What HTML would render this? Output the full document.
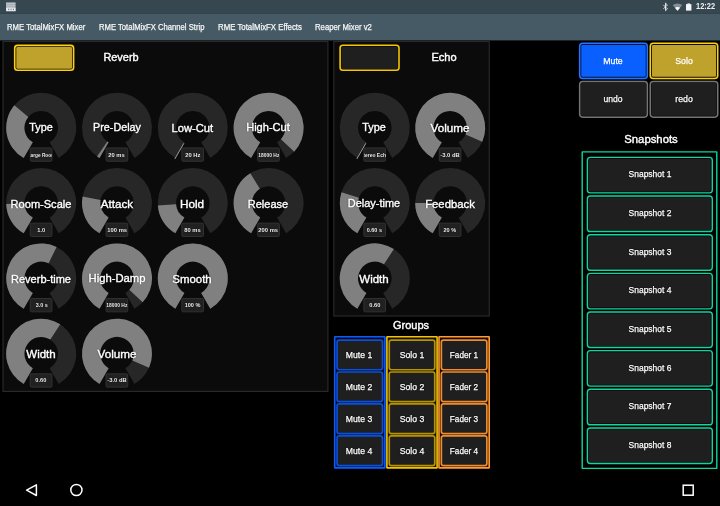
<!DOCTYPE html>
<html><head><meta charset="utf-8"><title>Mixer</title>
<style>
*{box-sizing:border-box;margin:0;padding:0}
html,body{width:720px;height:506px;overflow:hidden;background:#000}
body{font-family:"Liberation Sans",sans-serif;color:#fff;position:relative}
svg{position:absolute;left:0;top:0}
#tx{position:absolute;left:0;top:0;width:720px;height:506px;will-change:transform}
.t{position:absolute;white-space:nowrap;line-height:20px;-webkit-text-stroke:0.25px currentColor}
.vb{position:absolute;width:21.6px;height:12.2px;text-shadow:0 0 1px #000,0 0 1px #000;overflow:hidden;display:flex;align-items:center;justify-content:center;white-space:nowrap;color:#f2f2f2;font-weight:bold;font-size:6.0px}
.vb span{display:block;line-height:8px;flex:none}
</style></head><body>
<svg width="720" height="506" viewBox="0 0 720 506">
<rect x="0" y="0" width="720" height="13.5" fill="#37474f"/>
<rect x="0" y="13.4" width="720" height="27.0" fill="#455a64"/>
<rect x="6" y="2.3" width="9.6" height="9" fill="#9eaab0"/>
<rect x="6.3" y="3.2" width="9" height="1" fill="#c3cbcf"/><rect x="6.3" y="5.2" width="9" height="1.2" fill="#bcc5c9"/>
<rect x="6.2" y="7.6" width="9.3" height="3.5" fill="#eceff0"/>
<g fill="#56656d"><rect x="8.3" y="8.6" width="0.9" height="1.6"/><rect x="10.6" y="8.6" width="0.9" height="1.6"/><rect x="12.9" y="8.6" width="0.9" height="1.6"/></g>
<path d="M663.4 4.9L667.4 8.9L665.5 10.7V3.1L667.4 4.9L663.4 8.9" stroke="#f4f6f7" stroke-width="0.85" fill="none"/>
<path d="M672.7 5.0Q677.5 1.9 682.3 5.0L677.5 10.8Z" fill="#81909a"/>
<path d="M674.9 7.7Q677.5 6.3 680.1 7.7L677.5 10.8Z" fill="#fff"/>
<rect x="686" y="4.1" width="5.4" height="6.5" fill="#f4f6f7"/><rect x="687.5" y="3.4" width="2.4" height="1" fill="#f4f6f7"/>
<rect x="3.00" y="41.50" width="324.90" height="349.90" rx="0.00" fill="#0b0b0b" stroke="#282828" stroke-width="1.2"/><rect x="333.80" y="41.50" width="155.50" height="274.50" rx="0.00" fill="#0b0b0b" stroke="#282828" stroke-width="1.2"/><rect x="14.70" y="45.40" width="58.90" height="24.90" rx="2.80" fill="#100c0a" stroke="#fcd010" stroke-width="1.6"/><rect x="16.30" y="47.00" width="55.70" height="21.70" rx="1.20" fill="#bfa22c"/><rect x="340.10" y="45.30" width="58.90" height="25.00" rx="2.80" fill="#0c0a08" stroke="#f6c600" stroke-width="1.6"/><rect x="341.50" y="46.70" width="56.10" height="22.20" rx="1.40" fill="#1f1f1f"/><path d="M23.70 158.11A35.0 35.0 0 1 1 58.70 158.11L49.60 142.35A16.8 16.8 0 1 0 32.80 142.35Z" fill="#272727"/><path d="M23.70 158.11A35.0 35.0 0 0 1 14.35 105.35L28.31 117.02A16.8 16.8 0 0 0 32.80 142.35Z" fill="#808080"/><rect x="30.25" y="147.95" width="21.70" height="13.30" rx="1.15" fill="#212121" stroke="#363636" stroke-width="0.9"/><path d="M99.50 158.11A35.0 35.0 0 1 1 134.50 158.11L125.40 142.35A16.8 16.8 0 1 0 108.60 142.35Z" fill="#272727"/><path d="M99.50 158.11A35.0 35.0 0 0 1 97.03 156.54L107.41 141.60A16.8 16.8 0 0 0 108.60 142.35Z" fill="#808080"/><rect x="106.05" y="147.95" width="21.70" height="13.30" rx="1.15" fill="#212121" stroke="#363636" stroke-width="0.9"/><path d="M175.30 158.11A35.0 35.0 0 1 1 210.30 158.11L201.20 142.35A16.8 16.8 0 1 0 184.40 142.35Z" fill="#272727"/><path d="M183.90 143.22L174.80 158.98" stroke="#9c9c9c" stroke-width="1" fill="none"/><rect x="181.85" y="147.95" width="21.70" height="13.30" rx="1.15" fill="#212121" stroke="#363636" stroke-width="0.9"/><path d="M251.10 158.11A35.0 35.0 0 1 1 286.10 158.11L277.00 142.35A16.8 16.8 0 1 0 260.20 142.35Z" fill="#272727"/><path d="M251.10 158.11A35.0 35.0 0 1 1 294.24 151.63L280.91 139.24A16.8 16.8 0 1 0 260.20 142.35Z" fill="#808080"/><rect x="257.65" y="147.95" width="21.70" height="13.30" rx="1.15" fill="#212121" stroke="#363636" stroke-width="0.9"/><path d="M23.70 233.31A35.0 35.0 0 1 1 58.70 233.31L49.60 217.55A16.8 16.8 0 1 0 32.80 217.55Z" fill="#272727"/><path d="M23.70 233.31A35.0 35.0 0 0 1 6.21 203.92L24.41 203.44A16.8 16.8 0 0 0 32.80 217.55Z" fill="#808080"/><rect x="30.25" y="223.15" width="21.70" height="13.30" rx="1.15" fill="#212121" stroke="#363636" stroke-width="0.9"/><path d="M99.50 233.31A35.0 35.0 0 1 1 134.50 233.31L125.40 217.55A16.8 16.8 0 1 0 108.60 217.55Z" fill="#272727"/><path d="M99.50 233.31A35.0 35.0 0 0 1 82.59 196.62L100.48 199.94A16.8 16.8 0 0 0 108.60 217.55Z" fill="#808080"/><rect x="106.05" y="223.15" width="21.70" height="13.30" rx="1.15" fill="#212121" stroke="#363636" stroke-width="0.9"/><path d="M175.30 233.31A35.0 35.0 0 1 1 210.30 233.31L201.20 217.55A16.8 16.8 0 1 0 184.40 217.55Z" fill="#272727"/><path d="M175.30 233.31A35.0 35.0 0 0 1 157.88 205.38L176.04 204.14A16.8 16.8 0 0 0 184.40 217.55Z" fill="#808080"/><rect x="181.85" y="223.15" width="21.70" height="13.30" rx="1.15" fill="#212121" stroke="#363636" stroke-width="0.9"/><path d="M251.10 233.31A35.0 35.0 0 1 1 286.10 233.31L277.00 217.55A16.8 16.8 0 1 0 260.20 217.55Z" fill="#272727"/><path d="M251.10 233.31A35.0 35.0 0 0 1 250.31 173.16L259.82 188.68A16.8 16.8 0 0 0 260.20 217.55Z" fill="#808080"/><rect x="257.65" y="223.15" width="21.70" height="13.30" rx="1.15" fill="#212121" stroke="#363636" stroke-width="0.9"/><path d="M23.70 308.71A35.0 35.0 0 1 1 58.70 308.71L49.60 292.95A16.8 16.8 0 1 0 32.80 292.95Z" fill="#272727"/><path d="M23.70 308.71A35.0 35.0 0 0 1 56.60 246.97L48.59 263.31A16.8 16.8 0 0 0 32.80 292.95Z" fill="#808080"/><rect x="30.25" y="298.55" width="21.70" height="13.30" rx="1.15" fill="#212121" stroke="#363636" stroke-width="0.9"/><path d="M99.50 308.71A35.0 35.0 0 1 1 134.50 308.71L125.40 292.95A16.8 16.8 0 1 0 108.60 292.95Z" fill="#272727"/><path d="M99.50 308.71A35.0 35.0 0 1 1 142.64 302.23L129.31 289.84A16.8 16.8 0 1 0 108.60 292.95Z" fill="#808080"/><rect x="106.05" y="298.55" width="21.70" height="13.30" rx="1.15" fill="#212121" stroke="#363636" stroke-width="0.9"/><path d="M175.30 308.71A35.0 35.0 0 1 1 210.30 308.71L201.20 292.95A16.8 16.8 0 1 0 184.40 292.95Z" fill="#272727"/><path d="M175.30 308.71A35.0 35.0 0 1 1 210.30 308.71L201.20 292.95A16.8 16.8 0 1 0 184.40 292.95Z" fill="#808080"/><rect x="181.85" y="298.55" width="21.70" height="13.30" rx="1.15" fill="#212121" stroke="#363636" stroke-width="0.9"/><path d="M23.70 384.01A35.0 35.0 0 1 1 58.70 384.01L49.60 368.25A16.8 16.8 0 1 0 32.80 368.25Z" fill="#272727"/><path d="M23.70 384.01A35.0 35.0 0 1 1 60.26 324.35L50.35 339.61A16.8 16.8 0 1 0 32.80 368.25Z" fill="#808080"/><rect x="30.25" y="373.85" width="21.70" height="13.30" rx="1.15" fill="#212121" stroke="#363636" stroke-width="0.9"/><path d="M99.50 384.01A35.0 35.0 0 1 1 134.50 384.01L125.40 368.25A16.8 16.8 0 1 0 108.60 368.25Z" fill="#272727"/><path d="M99.50 384.01A35.0 35.0 0 1 1 149.05 367.77L132.38 360.45A16.8 16.8 0 1 0 108.60 368.25Z" fill="#808080"/><rect x="106.05" y="373.85" width="21.70" height="13.30" rx="1.15" fill="#212121" stroke="#363636" stroke-width="0.9"/><path d="M357.30 158.11A35.0 35.0 0 1 1 392.30 158.11L383.20 142.35A16.8 16.8 0 1 0 366.40 142.35Z" fill="#272727"/><path d="M365.90 143.22L356.80 158.98" stroke="#9c9c9c" stroke-width="1" fill="none"/><rect x="363.85" y="147.95" width="21.70" height="13.30" rx="1.15" fill="#212121" stroke="#363636" stroke-width="0.9"/><path d="M432.70 158.11A35.0 35.0 0 1 1 467.70 158.11L458.60 142.35A16.8 16.8 0 1 0 441.80 142.35Z" fill="#272727"/><path d="M432.70 158.11A35.0 35.0 0 1 1 482.25 141.87L465.58 134.55A16.8 16.8 0 1 0 441.80 142.35Z" fill="#808080"/><rect x="439.25" y="147.95" width="21.70" height="13.30" rx="1.15" fill="#212121" stroke="#363636" stroke-width="0.9"/><path d="M357.30 233.31A35.0 35.0 0 1 1 392.30 233.31L383.20 217.55A16.8 16.8 0 1 0 366.40 217.55Z" fill="#272727"/><path d="M357.30 233.31A35.0 35.0 0 0 1 341.51 192.18L358.82 197.81A16.8 16.8 0 0 0 366.40 217.55Z" fill="#808080"/><rect x="363.85" y="223.15" width="21.70" height="13.30" rx="1.15" fill="#212121" stroke="#363636" stroke-width="0.9"/><path d="M432.70 233.31A35.0 35.0 0 1 1 467.70 233.31L458.60 217.55A16.8 16.8 0 1 0 441.80 217.55Z" fill="#272727"/><path d="M432.70 233.31A35.0 35.0 0 0 1 415.20 203.00L433.40 203.00A16.8 16.8 0 0 0 441.80 217.55Z" fill="#808080"/><rect x="439.25" y="223.15" width="21.70" height="13.30" rx="1.15" fill="#212121" stroke="#363636" stroke-width="0.9"/><path d="M357.30 308.71A35.0 35.0 0 1 1 392.30 308.71L383.20 292.95A16.8 16.8 0 1 0 366.40 292.95Z" fill="#272727"/><path d="M357.30 308.71A35.0 35.0 0 1 1 393.86 249.05L383.95 264.31A16.8 16.8 0 1 0 366.40 292.95Z" fill="#808080"/><rect x="363.85" y="298.55" width="21.70" height="13.30" rx="1.15" fill="#212121" stroke="#363636" stroke-width="0.9"/><rect x="579.65" y="43.35" width="67.70" height="35.10" rx="3.05" fill="#06123a" stroke="#2474ff" stroke-width="1.5"/><rect x="581.30" y="45.00" width="64.40" height="31.80" rx="1.40" fill="#0a60ff"/><rect x="650.25" y="43.35" width="67.50" height="35.10" rx="3.05" fill="#100c0a" stroke="#fcd010" stroke-width="1.5"/><rect x="651.90" y="45.00" width="64.20" height="31.80" rx="1.40" fill="#bfa22c"/><rect x="579.65" y="81.45" width="67.70" height="35.70" rx="3.05" fill="#0e0e0e" stroke="#747474" stroke-width="1.5"/><rect x="581.00" y="82.80" width="65.00" height="33.00" rx="1.70" fill="#1f1f1f"/><rect x="650.25" y="81.45" width="67.50" height="35.70" rx="3.05" fill="#0e0e0e" stroke="#747474" stroke-width="1.5"/><rect x="651.60" y="82.80" width="64.80" height="33.00" rx="1.70" fill="#1f1f1f"/><rect x="582.20" y="151.90" width="134.60" height="316.50" rx="0.10" fill="#000" stroke="#0ed6a0" stroke-width="1.4"/><rect x="587.40" y="157.40" width="124.90" height="35.50" rx="2.90" fill="#0c0808" stroke="#0ed6a0" stroke-width="1.4"/><rect x="588.90" y="158.90" width="121.90" height="32.50" rx="1.40" fill="#1f1f1f"/><rect x="587.40" y="196.05" width="124.90" height="35.50" rx="2.90" fill="#0c0808" stroke="#0ed6a0" stroke-width="1.4"/><rect x="588.90" y="197.55" width="121.90" height="32.50" rx="1.40" fill="#1f1f1f"/><rect x="587.40" y="234.70" width="124.90" height="35.50" rx="2.90" fill="#0c0808" stroke="#0ed6a0" stroke-width="1.4"/><rect x="588.90" y="236.20" width="121.90" height="32.50" rx="1.40" fill="#1f1f1f"/><rect x="587.40" y="273.35" width="124.90" height="35.50" rx="2.90" fill="#0c0808" stroke="#0ed6a0" stroke-width="1.4"/><rect x="588.90" y="274.85" width="121.90" height="32.50" rx="1.40" fill="#1f1f1f"/><rect x="587.40" y="312.00" width="124.90" height="35.50" rx="2.90" fill="#0c0808" stroke="#0ed6a0" stroke-width="1.4"/><rect x="588.90" y="313.50" width="121.90" height="32.50" rx="1.40" fill="#1f1f1f"/><rect x="587.40" y="350.65" width="124.90" height="35.50" rx="2.90" fill="#0c0808" stroke="#0ed6a0" stroke-width="1.4"/><rect x="588.90" y="352.15" width="121.90" height="32.50" rx="1.40" fill="#1f1f1f"/><rect x="587.40" y="389.30" width="124.90" height="35.50" rx="2.90" fill="#0c0808" stroke="#0ed6a0" stroke-width="1.4"/><rect x="588.90" y="390.80" width="121.90" height="32.50" rx="1.40" fill="#1f1f1f"/><rect x="587.40" y="427.95" width="124.90" height="35.50" rx="2.90" fill="#0c0808" stroke="#0ed6a0" stroke-width="1.4"/><rect x="588.90" y="429.45" width="121.90" height="32.50" rx="1.40" fill="#1f1f1f"/><rect x="334.70" y="336.70" width="50.20" height="131.20" rx="0.40" fill="#020a1c" stroke="#0a5cff" stroke-width="1.6"/><rect x="337.05" y="340.05" width="45.50" height="29.70" rx="2.15" fill="#1f1f1f" stroke="#0a50dc" stroke-width="1.7"/><rect x="337.05" y="372.00" width="45.50" height="29.70" rx="2.15" fill="#1f1f1f" stroke="#0a50dc" stroke-width="1.7"/><rect x="337.05" y="403.95" width="45.50" height="29.70" rx="2.15" fill="#1f1f1f" stroke="#0a50dc" stroke-width="1.7"/><rect x="337.05" y="435.90" width="45.50" height="29.70" rx="2.15" fill="#1f1f1f" stroke="#0a50dc" stroke-width="1.7"/><rect x="386.90" y="336.70" width="50.20" height="131.20" rx="0.40" fill="#141000" stroke="#f4c400" stroke-width="1.6"/><rect x="389.25" y="340.05" width="45.50" height="29.70" rx="2.15" fill="#1f1f1f" stroke="#b89400" stroke-width="1.7"/><rect x="389.25" y="372.00" width="45.50" height="29.70" rx="2.15" fill="#1f1f1f" stroke="#b89400" stroke-width="1.7"/><rect x="389.25" y="403.95" width="45.50" height="29.70" rx="2.15" fill="#1f1f1f" stroke="#b89400" stroke-width="1.7"/><rect x="389.25" y="435.90" width="45.50" height="29.70" rx="2.15" fill="#1f1f1f" stroke="#b89400" stroke-width="1.7"/><rect x="439.00" y="336.70" width="50.20" height="131.20" rx="0.40" fill="#180c02" stroke="#ff9a36" stroke-width="1.6"/><rect x="441.35" y="340.05" width="45.50" height="29.70" rx="2.15" fill="#1f1f1f" stroke="#f08c30" stroke-width="1.7"/><rect x="441.35" y="372.00" width="45.50" height="29.70" rx="2.15" fill="#1f1f1f" stroke="#f08c30" stroke-width="1.7"/><rect x="441.35" y="403.95" width="45.50" height="29.70" rx="2.15" fill="#1f1f1f" stroke="#f08c30" stroke-width="1.7"/><rect x="441.35" y="435.90" width="45.50" height="29.70" rx="2.15" fill="#1f1f1f" stroke="#f08c30" stroke-width="1.7"/>
<path d="M26.6 490.2L36.4 484.9V495.5Z" stroke="#fff" stroke-width="1.5" fill="none" stroke-linejoin="round"/>
<circle cx="76.4" cy="490" r="5.6" stroke="#fff" stroke-width="1.5" fill="none"/>
<rect x="683.2" y="485.2" width="10" height="10" stroke="#fff" stroke-width="1.5" fill="none"/>
</svg>
<div id="tx"><div class="t" style="top:46.81px;font-size:11.5px;color:#fff;left:21.00px;width:200px;text-align:center;transform:scaleX(0.950);-webkit-text-stroke:0.4px #fff;">Reverb</div><div class="t" style="top:47.11px;font-size:11.5px;color:#fff;left:344.10px;width:200px;text-align:center;transform:scaleX(0.961);-webkit-text-stroke:0.4px #fff;">Echo</div><div class="vb" style="left:30.40px;top:148.50px"><span style="transform:scaleX(0.795)">Large&nbsp;Room</span></div><div class="t" style="top:117.31px;font-size:11.2px;color:#fff;left:-59.20px;width:200px;text-align:center;transform:scaleX(0.968);-webkit-text-stroke:0.35px #fff;text-shadow:0 0 1.5px rgba(0,0,0,.9);">Type</div><div class="vb" style="left:106.20px;top:148.50px"><span style="transform:scaleX(0.963)">20 ms</span></div><div class="t" style="top:117.31px;font-size:11.2px;color:#fff;left:16.60px;width:200px;text-align:center;transform:scaleX(0.962);-webkit-text-stroke:0.35px #fff;text-shadow:0 0 1.5px rgba(0,0,0,.9);">Pre-Delay</div><div class="vb" style="left:182.00px;top:148.50px"><span style="transform:scaleX(0.971)">20 Hz</span></div><div class="t" style="top:118.41px;font-size:11.2px;color:#fff;left:92.40px;width:200px;text-align:center;-webkit-text-stroke:0.35px #fff;text-shadow:0 0 1.5px rgba(0,0,0,.9);">Low-Cut</div><div class="vb" style="left:257.80px;top:148.50px"><span style="transform:scaleX(0.818)">18000 Hz</span></div><div class="t" style="top:117.31px;font-size:11.2px;color:#fff;left:168.20px;width:200px;text-align:center;transform:scaleX(0.989);-webkit-text-stroke:0.35px #fff;text-shadow:0 0 1.5px rgba(0,0,0,.9);">High-Cut</div><div class="vb" style="left:30.40px;top:223.70px"><span style="transform:scaleX(0.944)">1.0</span></div><div class="t" style="top:193.61px;font-size:11.2px;color:#fff;left:-59.20px;width:200px;text-align:center;transform:scaleX(0.987);-webkit-text-stroke:0.35px #fff;text-shadow:0 0 1.5px rgba(0,0,0,.9);">Room-Scale</div><div class="vb" style="left:106.20px;top:223.70px"><span style="transform:scaleX(0.970)">100 ms</span></div><div class="t" style="top:193.61px;font-size:11.2px;color:#fff;left:16.60px;width:200px;text-align:center;transform:scaleX(1.041);-webkit-text-stroke:0.35px #fff;text-shadow:0 0 1.5px rgba(0,0,0,.9);">Attack</div><div class="vb" style="left:182.00px;top:223.70px"><span style="transform:scaleX(0.963)">80 ms</span></div><div class="t" style="top:193.61px;font-size:11.2px;color:#fff;left:92.40px;width:200px;text-align:center;transform:scaleX(1.046);-webkit-text-stroke:0.35px #fff;text-shadow:0 0 1.5px rgba(0,0,0,.9);">Hold</div><div class="vb" style="left:257.80px;top:223.70px"><span style="transform:scaleX(0.970)">200 ms</span></div><div class="t" style="top:193.61px;font-size:11.2px;color:#fff;left:168.20px;width:200px;text-align:center;transform:scaleX(0.986);-webkit-text-stroke:0.35px #fff;text-shadow:0 0 1.5px rgba(0,0,0,.9);">Release</div><div class="vb" style="left:30.40px;top:299.10px"><span style="transform:scaleX(0.905)">3.0 s</span></div><div class="t" style="top:269.01px;font-size:11.2px;color:#fff;left:-59.20px;width:200px;text-align:center;transform:scaleX(0.984);-webkit-text-stroke:0.35px #fff;text-shadow:0 0 1.5px rgba(0,0,0,.9);">Reverb-time</div><div class="vb" style="left:106.20px;top:299.10px"><span style="transform:scaleX(0.818)">18000 Hz</span></div><div class="t" style="top:267.91px;font-size:11.2px;color:#fff;left:16.60px;width:200px;text-align:center;transform:scaleX(1.006);-webkit-text-stroke:0.35px #fff;text-shadow:0 0 1.5px rgba(0,0,0,.9);">High-Damp</div><div class="vb" style="left:182.00px;top:299.10px"><span style="transform:scaleX(0.926)">100 %</span></div><div class="t" style="top:269.01px;font-size:11.2px;color:#fff;left:92.40px;width:200px;text-align:center;transform:scaleX(1.021);-webkit-text-stroke:0.35px #fff;text-shadow:0 0 1.5px rgba(0,0,0,.9);">Smooth</div><div class="vb" style="left:30.40px;top:374.40px"><span style="transform:scaleX(0.944)">0.60</span></div><div class="t" style="top:344.31px;font-size:11.2px;color:#fff;left:-59.20px;width:200px;text-align:center;transform:scaleX(1.030);-webkit-text-stroke:0.35px #fff;text-shadow:0 0 1.5px rgba(0,0,0,.9);">Width</div><div class="vb" style="left:106.20px;top:374.40px"><span style="transform:scaleX(0.971)">-3.0 dB</span></div><div class="t" style="top:344.31px;font-size:11.2px;color:#fff;left:16.60px;width:200px;text-align:center;transform:scaleX(1.044);-webkit-text-stroke:0.35px #fff;text-shadow:0 0 1.5px rgba(0,0,0,.9);">Volume</div><div class="vb" style="left:364.00px;top:148.50px"><span style="transform:scaleX(0.825)">Stereo&nbsp;Echo</span></div><div class="t" style="top:117.31px;font-size:11.2px;color:#fff;left:274.40px;width:200px;text-align:center;transform:scaleX(0.968);-webkit-text-stroke:0.35px #fff;text-shadow:0 0 1.5px rgba(0,0,0,.9);">Type</div><div class="vb" style="left:439.40px;top:148.50px"><span style="transform:scaleX(0.971)">-3.0 dB</span></div><div class="t" style="top:118.41px;font-size:11.2px;color:#fff;left:349.80px;width:200px;text-align:center;transform:scaleX(1.044);-webkit-text-stroke:0.35px #fff;text-shadow:0 0 1.5px rgba(0,0,0,.9);">Volume</div><div class="vb" style="left:364.00px;top:223.70px"><span style="transform:scaleX(0.913)">0.60 s</span></div><div class="t" style="top:192.51px;font-size:11.2px;color:#fff;left:274.40px;width:200px;text-align:center;transform:scaleX(0.979);-webkit-text-stroke:0.35px #fff;text-shadow:0 0 1.5px rgba(0,0,0,.9);">Delay-time</div><div class="vb" style="left:439.40px;top:223.70px"><span style="transform:scaleX(0.921)">20 %</span></div><div class="t" style="top:193.61px;font-size:11.2px;color:#fff;left:349.80px;width:200px;text-align:center;transform:scaleX(1.010);-webkit-text-stroke:0.35px #fff;text-shadow:0 0 1.5px rgba(0,0,0,.9);">Feedback</div><div class="vb" style="left:364.00px;top:299.10px"><span style="transform:scaleX(0.944)">0.60</span></div><div class="t" style="top:269.01px;font-size:11.2px;color:#fff;left:274.40px;width:200px;text-align:center;transform:scaleX(1.030);-webkit-text-stroke:0.35px #fff;text-shadow:0 0 1.5px rgba(0,0,0,.9);">Width</div><div class="t" style="top:50.78px;font-size:9.0px;color:#fff;left:513.20px;width:200px;text-align:center;transform:scaleX(0.975);">Mute</div><div class="t" style="top:50.78px;font-size:9.0px;color:#fff;left:583.60px;width:200px;text-align:center;transform:scaleX(0.972);">Solo</div><div class="t" style="top:89.18px;font-size:9.0px;color:#fff;left:513.20px;width:200px;text-align:center;transform:scaleX(0.954);text-shadow:0 0 1.2px #000,0 0 1.2px #000;">undo</div><div class="t" style="top:89.18px;font-size:9.0px;color:#fff;left:583.60px;width:200px;text-align:center;transform:scaleX(0.972);text-shadow:0 0 1.2px #000,0 0 1.2px #000;">redo</div><div class="t" style="top:129.07px;font-size:11.6px;color:#fff;left:551.00px;width:200px;text-align:center;transform:scaleX(0.976);-webkit-text-stroke:0.4px #fff;">Snapshots</div><div class="t" style="top:164.33px;font-size:9.0px;color:#fff;left:549.80px;width:200px;text-align:center;transform:scaleX(0.940);text-shadow:0 0 1.2px #000,0 0 1.2px #000;">Snapshot 1</div><div class="t" style="top:202.98px;font-size:9.0px;color:#fff;left:549.80px;width:200px;text-align:center;transform:scaleX(0.940);text-shadow:0 0 1.2px #000,0 0 1.2px #000;">Snapshot 2</div><div class="t" style="top:241.63px;font-size:9.0px;color:#fff;left:549.80px;width:200px;text-align:center;transform:scaleX(0.940);text-shadow:0 0 1.2px #000,0 0 1.2px #000;">Snapshot 3</div><div class="t" style="top:280.28px;font-size:9.0px;color:#fff;left:549.80px;width:200px;text-align:center;transform:scaleX(0.940);text-shadow:0 0 1.2px #000,0 0 1.2px #000;">Snapshot 4</div><div class="t" style="top:318.93px;font-size:9.0px;color:#fff;left:549.80px;width:200px;text-align:center;transform:scaleX(0.940);text-shadow:0 0 1.2px #000,0 0 1.2px #000;">Snapshot 5</div><div class="t" style="top:357.58px;font-size:9.0px;color:#fff;left:549.80px;width:200px;text-align:center;transform:scaleX(0.940);text-shadow:0 0 1.2px #000,0 0 1.2px #000;">Snapshot 6</div><div class="t" style="top:396.23px;font-size:9.0px;color:#fff;left:549.80px;width:200px;text-align:center;transform:scaleX(0.940);text-shadow:0 0 1.2px #000,0 0 1.2px #000;">Snapshot 7</div><div class="t" style="top:434.88px;font-size:9.0px;color:#fff;left:549.80px;width:200px;text-align:center;transform:scaleX(0.940);text-shadow:0 0 1.2px #000,0 0 1.2px #000;">Snapshot 8</div><div class="t" style="top:314.68px;font-size:11.3px;color:#fff;left:310.80px;width:200px;text-align:center;transform:scaleX(0.977);-webkit-text-stroke:0.4px #fff;">Groups</div><div class="t" style="top:344.78px;font-size:9.0px;color:#fff;left:259.30px;width:200px;text-align:center;transform:scaleX(0.960);text-shadow:0 0 1.2px #000,0 0 1.2px #000;">Mute 1</div><div class="t" style="top:376.73px;font-size:9.0px;color:#fff;left:259.30px;width:200px;text-align:center;transform:scaleX(0.960);text-shadow:0 0 1.2px #000,0 0 1.2px #000;">Mute 2</div><div class="t" style="top:408.68px;font-size:9.0px;color:#fff;left:259.30px;width:200px;text-align:center;transform:scaleX(0.960);text-shadow:0 0 1.2px #000,0 0 1.2px #000;">Mute 3</div><div class="t" style="top:440.63px;font-size:9.0px;color:#fff;left:259.30px;width:200px;text-align:center;transform:scaleX(0.960);text-shadow:0 0 1.2px #000,0 0 1.2px #000;">Mute 4</div><div class="t" style="top:344.78px;font-size:9.0px;color:#fff;left:311.50px;width:200px;text-align:center;transform:scaleX(0.964);text-shadow:0 0 1.2px #000,0 0 1.2px #000;">Solo 1</div><div class="t" style="top:376.73px;font-size:9.0px;color:#fff;left:311.50px;width:200px;text-align:center;transform:scaleX(0.964);text-shadow:0 0 1.2px #000,0 0 1.2px #000;">Solo 2</div><div class="t" style="top:408.68px;font-size:9.0px;color:#fff;left:311.50px;width:200px;text-align:center;transform:scaleX(0.964);text-shadow:0 0 1.2px #000,0 0 1.2px #000;">Solo 3</div><div class="t" style="top:440.63px;font-size:9.0px;color:#fff;left:311.50px;width:200px;text-align:center;transform:scaleX(0.964);text-shadow:0 0 1.2px #000,0 0 1.2px #000;">Solo 4</div><div class="t" style="top:344.78px;font-size:9.0px;color:#fff;left:363.60px;width:200px;text-align:center;transform:scaleX(0.912);text-shadow:0 0 1.2px #000,0 0 1.2px #000;">Fader 1</div><div class="t" style="top:376.73px;font-size:9.0px;color:#fff;left:363.60px;width:200px;text-align:center;transform:scaleX(0.912);text-shadow:0 0 1.2px #000,0 0 1.2px #000;">Fader 2</div><div class="t" style="top:408.68px;font-size:9.0px;color:#fff;left:363.60px;width:200px;text-align:center;transform:scaleX(0.912);text-shadow:0 0 1.2px #000,0 0 1.2px #000;">Fader 3</div><div class="t" style="top:440.63px;font-size:9.0px;color:#fff;left:363.60px;width:200px;text-align:center;transform:scaleX(0.912);text-shadow:0 0 1.2px #000,0 0 1.2px #000;">Fader 4</div><div class="t" style="top:17.02px;font-size:8.6px;color:#f4f6f7;left:6.70px;transform-origin:0 50%;transform:scaleX(0.897);">RME TotalMixFX Mixer</div><div class="t" style="top:17.02px;font-size:8.6px;color:#f4f6f7;left:98.70px;transform-origin:0 50%;transform:scaleX(0.891);">RME TotalMixFX Channel Strip</div><div class="t" style="top:17.02px;font-size:8.6px;color:#f4f6f7;left:217.50px;transform-origin:0 50%;transform:scaleX(0.909);">RME TotalMixFX Effects</div><div class="t" style="top:17.02px;font-size:8.6px;color:#f4f6f7;left:315.00px;transform-origin:0 50%;transform:scaleX(0.903);">Reaper Mixer v2</div><div class="t" style="top:-2.65px;font-size:8.2px;color:#eef1f2;font-weight:bold;left:696.00px;transform-origin:0 50%;transform:scaleX(0.911);-webkit-text-stroke:0;">12:22</div></div>
</body></html>
